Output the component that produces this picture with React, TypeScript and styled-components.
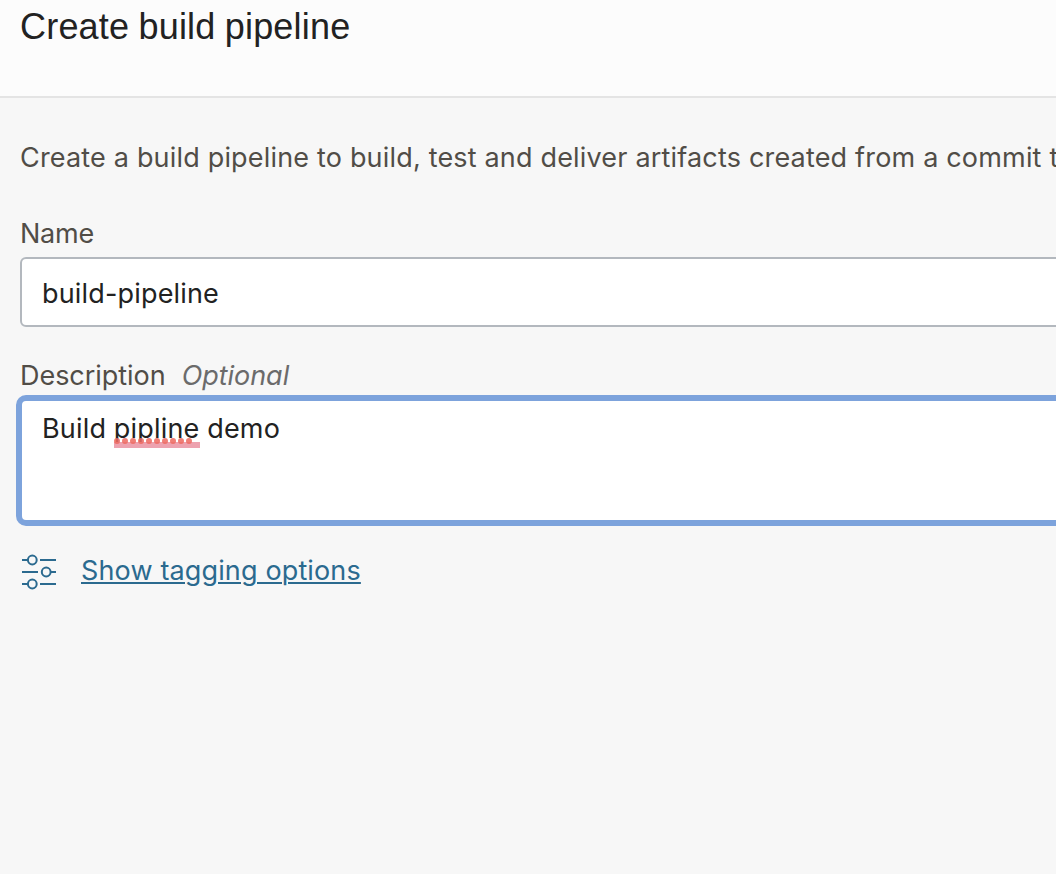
import React from "react";
import styled, { createGlobalStyle } from "styled-components";

const GlobalStyle = createGlobalStyle`
  * { box-sizing: border-box; }
  html, body { margin: 0; background: #f7f7f7; overflow: hidden; }
`;

const Panel = styled.main`
  width: 100%;
  height: 874px;
  overflow: hidden;
  background: #f7f7f7;
  font-family: Inter, "Liberation Sans", sans-serif;
  font-size: 27px;
  line-height: 34px;
  color: #514d47;
`;

const Header = styled.header`
  height: 98px;
  padding: 6px 20px 0;
  background: #fcfcfc;
  border-bottom: 2px solid #e4e4e4;
`;

const Title = styled.h1`
  margin: 0;
  font-family: "Liberation Sans", sans-serif;
  font-size: 36px;
  font-weight: 400;
  line-height: 42px;
  letter-spacing: 0.2px;
  word-spacing: -1px;
  color: #222;
`;

const Form = styled.form`
  display: flex;
  flex-direction: column;
  width: 1200px;
  padding: 43px 20px 0;
`;

const Text = styled.span<{ $spacing?: number }>`
  white-space: pre;
  letter-spacing: ${({ $spacing = 0 }) => $spacing}px;
`;

const Intro = styled.p`
  margin: 0 0 42px;
`;

const Label = styled.label`
  display: flex;
  gap: 16px;
  height: 34px;
`;

const Optional = styled(Text)`
  font-style: italic;
  color: #6b6b6b;
`;

const NameField = styled.div`
  display: flex;
  align-items: center;
  height: 70px;
  margin: 6px 0 32px;
  padding: 4px 20px 0;
  background: #fff;
  border: 2px solid #b3b8be;
  border-radius: 6px;
  color: #222;
`;

const DescriptionField = styled.div`
  height: 131px;
  margin: 2px -4px 0;
  padding: 11px 20px 0;
  background: #fff;
  border: 6px solid #7da3dc;
  border-radius: 10px;
  color: #222;
`;

const Misspelled = styled.span`
  position: relative;
  display: inline-block;
`;

const SpellingMark = styled.svg`
  position: absolute;
  left: 0;
  top: 24px;
`;

const TagOptions = styled.div`
  display: flex;
  align-items: center;
  gap: 25px;
  margin-top: 28px;
  padding-left: 2px;
`;

const TagLink = styled.a`
  padding-bottom: 2px;
  color: #2b6a8f;
  text-decoration: underline;
  text-decoration-thickness: 2px;
  text-underline-offset: 2px;
`;

const SlidersIcon = () => (
  <svg width="34" height="36" viewBox="0 0 34 36" fill="none" stroke="#2b6a8f" strokeWidth="2">
    <path d="M0 6h6M18 6h16M0 18h16M29 18h5M0 30h6M18 30h16" />
    <circle cx="10.3" cy="6" r="4.4" />
    <circle cx="24.2" cy="18" r="4.4" />
    <circle cx="10.3" cy="30" r="4.4" />
  </svg>
);

export default function App() {
  return (
    <Panel>
      <GlobalStyle />
      <Header>
        <Title>Create build pipeline</Title>
      </Header>
      <Form>
        <Intro>
          <Text $spacing={0.18}>Create a build pipeline to build, test and deliver artifacts created from a commit to</Text>
        </Intro>
        <Label><Text $spacing={-0.25}>Name</Text></Label>
        <NameField><Text $spacing={0.17}>build-pipeline</Text></NameField>
        <Label>
          <Text $spacing={-0.04}>Description</Text>
          <Optional $spacing={-0.05}>Optional</Optional>
        </Label>
        <DescriptionField>
          <Text $spacing={0.17}>
            Build{" "}
            <Misspelled>
              pipline
              <SpellingMark width="86" height="12" viewBox="0 0 86 12">
                <path d="M0 6h86v6H0z" fill="#eda2af" />
                <g fill="#ee6b62" fillOpacity=".87">
                  {Array.from({ length: 10 }, (_, i) => (
                    <circle key={i} cx={3 + i * 8} cy="5" r="3" />
                  ))}
                </g>
              </SpellingMark>
            </Misspelled>
            {" "}demo
          </Text>
        </DescriptionField>
        <TagOptions>
          <SlidersIcon />
          <TagLink><Text $spacing={0.14}>Show tagging options</Text></TagLink>
        </TagOptions>
      </Form>
    </Panel>
  );
}
